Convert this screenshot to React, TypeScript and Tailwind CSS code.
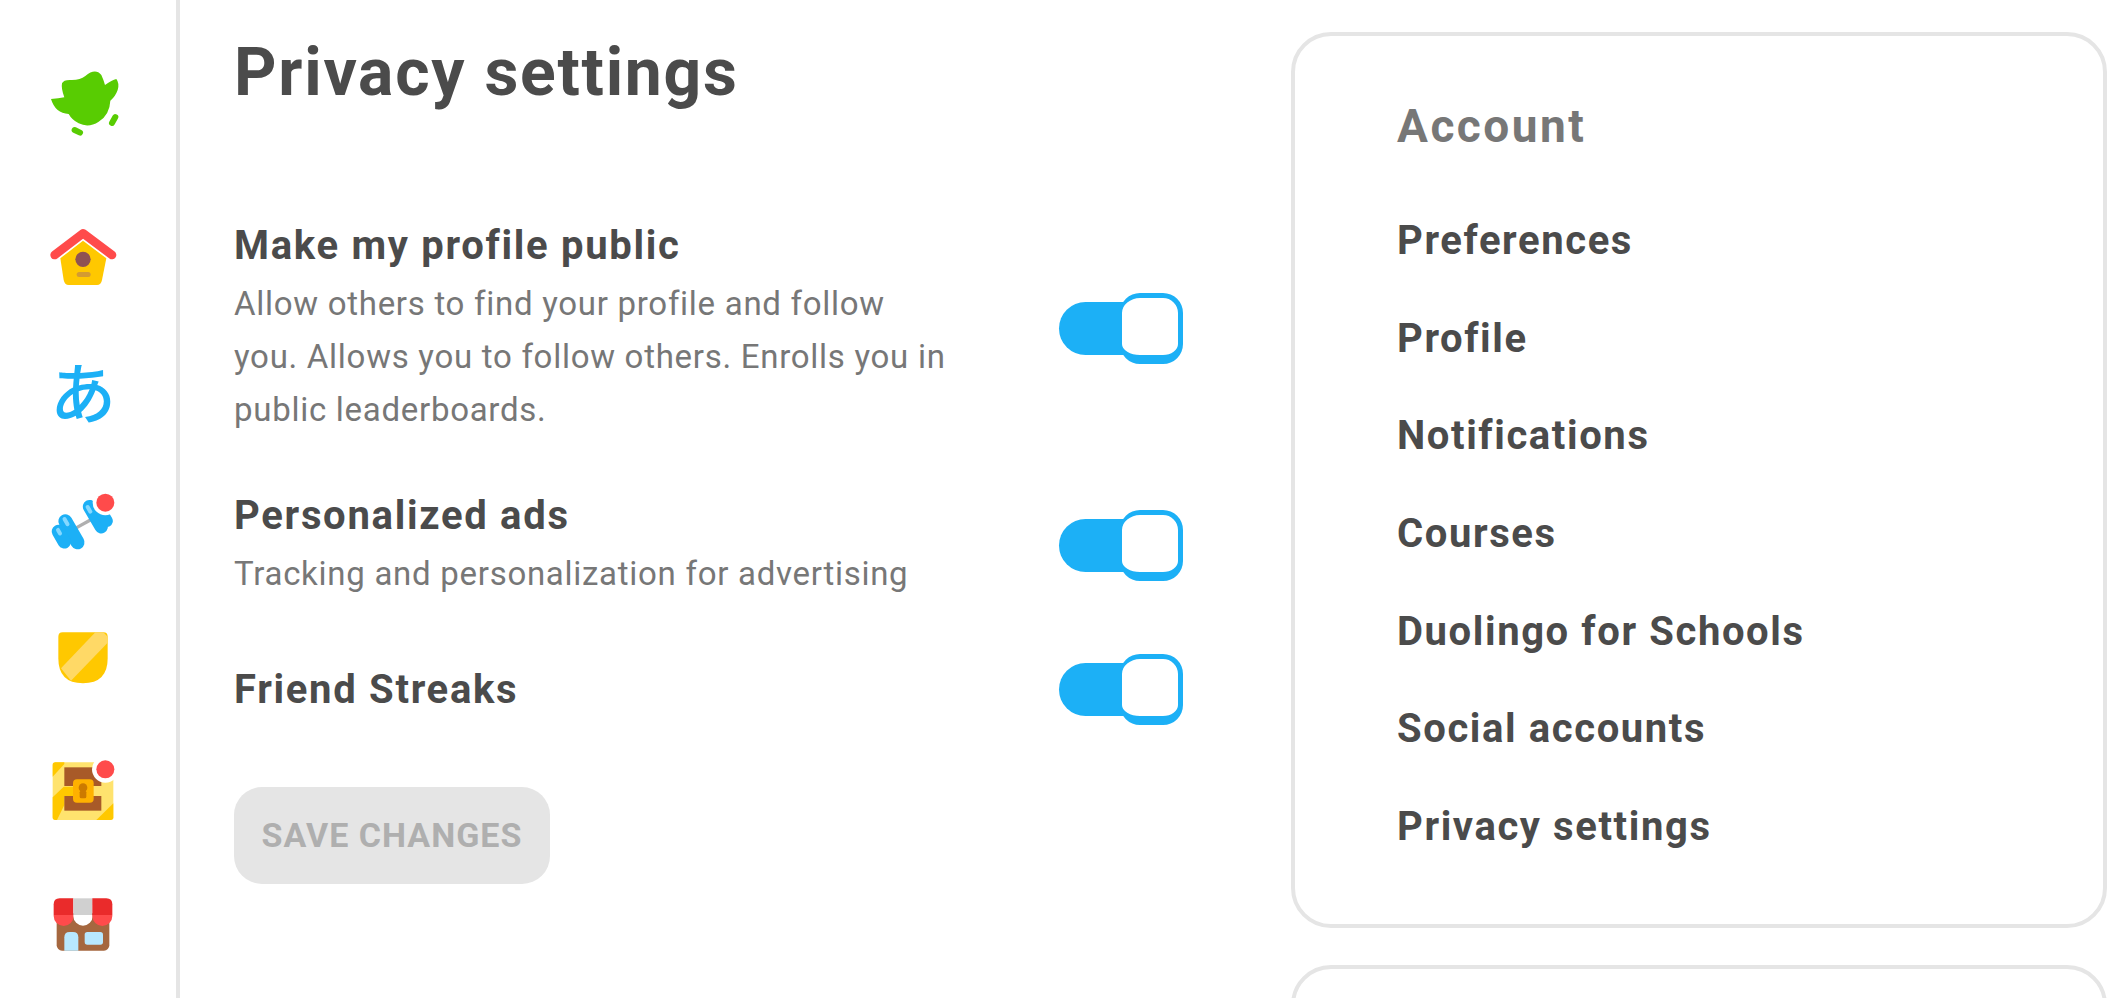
const Slot = ({ children, box }: { children: React.ReactNode; box: string }) => (
  <div className="flex h-[134px] w-[166px] items-center justify-center">
    <svg width="80" height="80" viewBox={box} aria-hidden="true">
      {children}
    </svg>
  </div>
);

const Sidebar = () => (
  <nav className="flex h-[998px] w-[180px] shrink-0 flex-col border-r-4 border-[#e5e5e5]">
    <div className="flex h-[190px] w-[166px] items-start justify-center pt-[63px]">
      <svg width="80" height="80" viewBox="128 189 240 240" aria-hidden="true">
        <path
          fill="#58cc02"
          d="M152 297Q175 295 192 292Q182 265 185 250Q190 238 215 240Q240 240 255 228Q285 203 303 225Q310 240 314 255Q335 240 348 237Q358 250 352 270Q345 290 330 302Q328 345 295 365Q265 385 235 370Q215 360 205 342Q165 340 152 297Z"
        />
        <rect x="213" y="385" width="36" height="18" rx="9" fill="#58cc02" transform="rotate(25 231 394)" />
        <rect x="331" y="341" width="18" height="38" rx="9" fill="#58cc02" transform="rotate(30 340 360)" />
      </svg>
    </div>

    <Slot box="128 651 240 240">
      <path
        fill="#ffc800"
        d="M248 722L318 775L305 840Q302 855 290 855L205 855Q193 855 190 840L180 775Z"
      />
      <path d="M163 765L248 700L335 765" fill="none" stroke="#ff4b4b" strokeWidth="26" strokeLinecap="round" strokeLinejoin="round" />
      <circle cx="248" cy="778" r="23" fill="#8f5252" />
      <rect x="229" y="816" width="42" height="15" rx="7.5" fill="#d39b32" />
    </Slot>

    <div className="flex h-[134px] w-[166px] items-center justify-center pb-[4px] font-['Noto_Sans_CJK_JP',sans-serif] text-[66px] font-medium leading-none text-[#1cb0f6]">
      あ
    </div>

    <Slot box="128 435 240 240">
      <line x1="225" y1="565" x2="270" y2="540" stroke="#afafaf" strokeWidth="10" />
      <g fill="#1cb0f6">
        <rect x="192" y="518" width="42" height="115" rx="21" transform="rotate(-30 213 575)" />
        <rect x="163" y="552" width="40" height="76" rx="20" transform="rotate(-30 183 590)" />
        <rect x="265" y="475" width="40" height="110" rx="20" transform="rotate(-30 285 530)" />
        <rect x="294" y="498" width="36" height="65" rx="18" transform="rotate(-30 312 530)" />
      </g>
      <g fill="#84d8ff">
        <rect x="191" y="530" width="12" height="30" rx="6" transform="rotate(-30 197 545)" />
        <rect x="170" y="563" width="12" height="24" rx="6" transform="rotate(-30 176 575)" />
        <rect x="260" y="494" width="12" height="28" rx="6" transform="rotate(-30 266 508)" />
      </g>
      <circle cx="315" cy="488" r="38" fill="#fff" />
      <circle cx="315" cy="488" r="27" fill="#ff4b4b" />
    </Slot>

    <Slot box="128 837 240 240">
      <path
        fill="#ffc800"
        d="M174 890Q174 877 187 877L309 877Q322 877 322 890L322 955Q322 1030 248 1030Q174 1030 174 955Z"
      />
      <polygon points="285,877 309,877 322,890 322,908 212,1022 182,985" fill="#ffd966" />
    </Slot>

    <Slot box="128 219 240 240">
      <rect x="157" y="247" width="182" height="173" rx="8" fill="#ffe36e" />
      <path d="M165 247H192V252L157 290V255Q157 247 165 247Z" fill="#ffc800" />
      <path d="M157 352L190 320H218V348H192V375L170 420H165Q157 420 157 412Z" fill="#ffc800" />
      <path d="M339 370V412Q339 420 331 420H288Z" fill="#ffc800" />
      <rect x="192" y="262" width="111" height="56" fill="#a85a28" />
      <rect x="192" y="348" width="111" height="44" fill="#a85a28" />
      <rect x="218" y="298" width="62" height="70" rx="12" fill="#ffb100" />
      <circle cx="248" cy="323" r="13" fill="#cc7a00" />
      <rect x="238" y="332" width="20" height="23" rx="5" fill="#cc7a00" />
      <circle cx="315" cy="268" r="40" fill="#fff" />
      <circle cx="315" cy="268" r="27" fill="#ff4b4b" />
    </Slot>

    <Slot box="128 621 240 240">
      <rect x="169" y="700" width="158" height="112" rx="16" fill="#a5673f" />
      <path d="M192 812V772Q192 756 208 756H218Q234 756 234 772V812Z" fill="#b8e8ff" />
      <rect x="253" y="756" width="55" height="38" rx="8" fill="#b8e8ff" />
      <path d="M160 705V673Q160 655 178 655H219V705Z" fill="#ea2b2b" />
      <rect x="219" y="655" width="57" height="50" fill="#d0d0d0" />
      <path d="M276 705V655H318Q336 655 336 673V705Z" fill="#ea2b2b" />
      <path d="M160 705H220V708A30 30 0 0 1 160 708Z" fill="#ff4b4b" />
      <path d="M219 705H277V708A29 29 0 0 1 219 708Z" fill="#fff" />
      <path d="M276 705H336V708A30 30 0 0 1 276 708Z" fill="#ff4b4b" />
    </Slot>
  </nav>
);

const Toggle = () => (
  <div className="relative h-[71px] w-[124px] shrink-0">
    <div className="absolute bottom-[9px] left-0 h-[53px] w-[90px] rounded-l-full bg-[#1cb0f6]" />
    <div className="absolute right-0 top-0 h-[71px] w-[63px] rounded-[20px] border-[5px] border-b-[9px] border-l-[2px] border-[#1cb0f6] bg-white" />
  </div>
);

const SettingRow = ({
  title,
  description,
}: {
  title: string;
  description?: string;
}) => (
  <div className="flex items-center justify-between">
    <div className="w-[716px]">
      <h2 className="text-[40px] font-bold leading-[52px] tracking-[1.7px] text-[#4b4b4b]">{title}</h2>
      {description && (
        <p className="mt-[5px] text-[33px] leading-[53px] tracking-[0.72px] text-[#777777]">{description}</p>
      )}
    </div>
    <Toggle />
  </div>
);

const links = [
  "Preferences",
  "Profile",
  "Notifications",
  "Courses",
  "Duolingo for Schools",
  "Social accounts",
  "Privacy settings",
];

export default function App() {
  return (
    <div className="flex h-[998px] w-[2120px] overflow-hidden bg-white font-['Roboto',sans-serif]">
      <Sidebar />

      <main className="ml-[54px] w-[949px] shrink-0">
        <h1 className="mt-[36px] text-[66px] font-bold leading-[74px] tracking-[1.75px] text-[#4b4b4b]">Privacy settings</h1>
        <div className="mt-[110px] flex flex-col gap-[54px]">
          <SettingRow
            title="Make my profile public"
            description="Allow others to find your profile and follow you. Allows you to follow others. Enrolls you in public leaderboards."
          />
          <SettingRow title="Personalized ads" description="Tracking and personalization for advertising" />
          <SettingRow title="Friend Streaks" />
        </div>
        <button className="mt-[62px] h-[97px] w-[316px] rounded-[28px] bg-[#e5e5e5] text-[34px] font-bold tracking-[1px] text-[#afafaf]">
          SAVE CHANGES
        </button>
      </main>

      <aside className="ml-[108px] mt-[32px] flex w-[816px] shrink-0 flex-col gap-[37px]">
        <section className="h-[896px] shrink-0 rounded-[40px] border-4 border-[#e5e5e5] pl-[102px] pt-[60px]">
          <h3 className="text-[46px] font-bold leading-[60px] tracking-[2.5px] text-[#777777]">Account</h3>
          <ul className="mt-[59px] flex flex-col">
            {links.map((link) => (
              <li key={link} className="h-[97.7px] text-[40px] font-bold leading-[52px] tracking-[1.6px] text-[#4b4b4b]">
                {link}
              </li>
            ))}
          </ul>
        </section>
        <section className="h-[200px] shrink-0 rounded-[40px] border-4 border-[#e5e5e5]" />
      </aside>
    </div>
  );
}
